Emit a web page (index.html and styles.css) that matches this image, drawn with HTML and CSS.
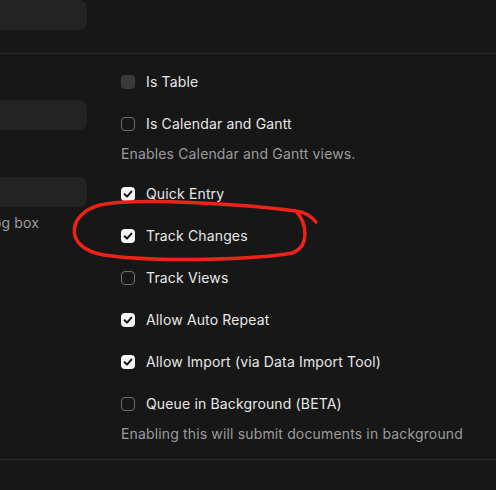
FILE: index.html
```html
<!DOCTYPE html>
<html lang="en">
    <head>
        <meta charset="UTF-8" />
        <meta name="viewport" content="width=device-width, initial-scale=1.0" />
        <link rel="stylesheet" href="styles.css">
        <title>DocType Settings</title>
    </head>
    <body>
        <div class="section top-section">
            <div class="column left-col">
                <div class="input"></div>
            </div>
        </div>

        <div class="section">
            <div class="column left-col">
                <div class="field">
                    <div class="input"></div>
                </div>
                <div class="field">
                    <div class="input"></div>
                    <p class="description">Show in the dialog box</p>
                </div>
            </div>

            <div class="column right-col">
                <div class="check-field">
                    <span class="checkbox disabled"></span>
                    <span class="check-label">Is Table</span>
                </div>
                <div class="check-field">
                    <span class="checkbox"></span>
                    <span class="check-label">Is Calendar and Gantt</span>
                </div>
                <p class="description">Enables Calendar and Gantt views.</p>
                <div class="check-field">
                    <span class="checkbox checked">
                        <svg viewBox="0 0 14 14"><path d="M3.6 7.3 L6 9.6 L10.4 4.6" /></svg>
                    </span>
                    <span class="check-label">Quick Entry</span>
                </div>
                <div class="check-field">
                    <span class="checkbox checked">
                        <svg viewBox="0 0 14 14"><path d="M3.6 7.3 L6 9.6 L10.4 4.6" /></svg>
                    </span>
                    <span class="check-label">Track Changes</span>
                </div>
                <div class="check-field">
                    <span class="checkbox"></span>
                    <span class="check-label">Track Views</span>
                </div>
                <div class="check-field">
                    <span class="checkbox checked">
                        <svg viewBox="0 0 14 14"><path d="M3.6 7.3 L6 9.6 L10.4 4.6" /></svg>
                    </span>
                    <span class="check-label">Allow Auto Repeat</span>
                </div>
                <div class="check-field">
                    <span class="checkbox checked">
                        <svg viewBox="0 0 14 14"><path d="M3.6 7.3 L6 9.6 L10.4 4.6" /></svg>
                    </span>
                    <span class="check-label">Allow Import (via Data Import Tool)</span>
                </div>
                <div class="check-field">
                    <span class="checkbox"></span>
                    <span class="check-label">Queue in Background (BETA)</span>
                </div>
                <p class="description">Enabling this will submit documents in background</p>
            </div>
        </div>

        <!-- hand-drawn marker ring -->
        <svg class="marker" viewBox="0 0 496 490">
            <path d="M296 211
                     C 250 205, 140 197, 100 205
                     C 68 213, 62 248, 104 255
                     C 160 263, 260 259, 292 253
                     C 311 246, 306 222, 296 211
                     C 305 212, 311 216, 316 222" />
        </svg>
    </body>
</html>
```

FILE: styles.css
```css
* {
    padding: 0;
    margin: 0;
    box-sizing: border-box;
}

html,
body {
    overflow: hidden;
}

body {
    min-height: 100vh;
    background: #171717;
    font-family: "Inter", "Noto Sans", sans-serif;
    color: #e8e8e8;
    letter-spacing: 0.15px;
    position: relative;
}

.section {
    display: flex;
    gap: 34px;
    padding: 14px 0 14px;
    border-bottom: 1px solid #262626;
}

.top-section {
    padding: 0 0 23px;
}

.left-col {
    width: 201px;
    margin-left: -114px;
    flex-shrink: 0;
}

.left-col .field:first-child {
    padding-top: 32px;
}

.right-col {
    flex: 1;
}

.field {
    margin-bottom: 15px;
}

.field + .field {
    padding-top: 32px;
}

.input {
    height: 30px;
    border-radius: 8px;
    background: #232323;
}

.description {
    font-size: 14px;
    line-height: 22px;
    margin-top: 5px;
    color: #9c9c9c;
    white-space: nowrap;
}

.right-col .description {
    margin-bottom: 15px;
}

.right-col .description:last-child {
    margin-bottom: 0;
}

.check-field {
    display: flex;
    align-items: center;
    gap: 11px;
    height: 28px;
    margin-bottom: 14px;
}

.check-field + .description {
    margin-top: -9px;
}

.check-label {
    font-size: 14px;
    line-height: 20px;
}

.checkbox {
    display: block;
    width: 14px;
    height: 14px;
    border-radius: 4px;
    border: 1px solid #6e6e6e;
}

.checkbox.disabled {
    border: none;
    background: #3a3a3a;
}

.checkbox.checked {
    border: none;
    background: #f7f7f7;
}

.checkbox svg {
    display: block;
    width: 14px;
    height: 14px;
}

.checkbox svg path {
    fill: none;
    stroke: #141414;
    stroke-width: 2;
    stroke-linecap: round;
    stroke-linejoin: round;
}

.marker {
    position: absolute;
    top: 0;
    left: 0;
    width: 496px;
    height: 490px;
    pointer-events: none;
}

.marker path {
    fill: none;
    stroke: #ee2218;
    stroke-width: 3.5;
    stroke-linecap: round;
    stroke-linejoin: round;
}
```
